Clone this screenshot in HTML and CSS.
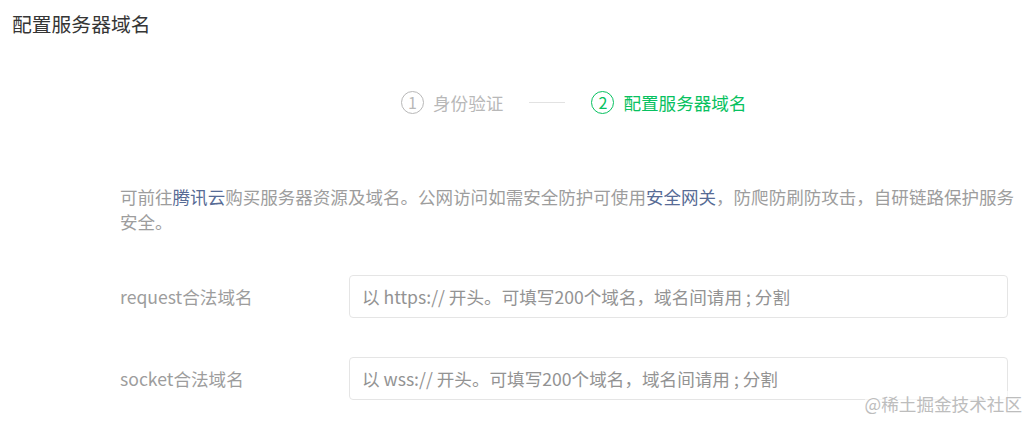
FILE: index.html
```html
<!DOCTYPE html>
<html lang="zh-CN">

<head>
    <meta charset="UTF-8">
    <meta name="viewport" content="width=device-width, initial-scale=1.0">
    <title>配置服务器域名</title>
    <link rel="stylesheet" href="styles.css">
</head>

<body>
    <div class="page">
        <h1 class="title">配置服务器域名</h1>

        <div class="steps">
            <div class="step done">
                <span class="num">1</span>
                <span class="label">身份验证</span>
            </div>
            <div class="step-line"></div>
            <div class="step active">
                <span class="num">2</span>
                <span class="label">配置服务器域名</span>
            </div>
        </div>

        <p class="desc">可前往<a href="#">腾讯云</a>购买服务器资源及域名。公网访问如需安全防护可使用<a href="#">安全网关</a>，防爬防刷防攻击，自研链路保护服务安全。</p>

        <div class="form">
            <div class="row">
                <label class="row-label">request合法域名</label>
                <input class="row-input" type="text" placeholder="以 https:// 开头。可填写200个域名，域名间请用 ; 分割">
            </div>
            <div class="row">
                <label class="row-label">socket合法域名</label>
                <input class="row-input" type="text" placeholder="以 wss:// 开头。可填写200个域名，域名间请用 ; 分割">
            </div>
        </div>

        <span class="watermark">@稀土掘金技术社区</span>
    </div>
</body>

</html>
```

FILE: styles.css
```css
body {
    margin: 0;
    background: #fff;
    font-family: "Noto Sans CJK SC", "Noto Sans", sans-serif;
    overflow: hidden;
}

.page {
    position: relative;
    height: 421px;
    padding: 10px 21px 0 12px;
    box-sizing: border-box;
}

.title {
    margin: 0;
    font-size: 19.8px;
    line-height: 28px;
    font-weight: normal;
    color: #353535;
}

.steps {
    display: flex;
    align-items: center;
    margin: 52px 0 0 389px;
    height: 24px;
}

.step {
    display: flex;
    align-items: center;
    gap: 9px;
    font-size: 17.6px;
    color: #b8b8b8;
}

.step .num {
    width: 21px;
    height: 21px;
    border: 1px solid #b8b8b8;
    border-radius: 50%;
    display: flex;
    justify-content: center;
    align-items: center;
    font-size: 16px;
    line-height: 1;
}

.step.active {
    color: #07c160;
}

.step.active .num {
    border-color: #07c160;
}

.step-line {
    width: 36px;
    height: 1px;
    background: #e2e2e2;
    margin: 0 26px 0 26px;
}

.desc {
    margin: 70px -21px 0 108px;
    font-size: 17.55px;
    line-height: 25px;
    color: #9d9d9d;
}

.desc a {
    color: #576b95;
    text-decoration: none;
}

.form {
    display: flex;
    flex-direction: column;
    gap: 39px;
    margin: 41px 0 0 108px;
}

.row {
    display: flex;
    align-items: center;
}

.row-label {
    width: 229px;
    flex-shrink: 0;
    font-size: 17.6px;
    color: #9d9d9d;
}

.row-input {
    flex: 1;
    height: 43px;
    box-sizing: border-box;
    border: 1px solid #e5e5e5;
    border-radius: 4px;
    padding: 0 12px;
    font-family: inherit;
    font-size: 17.6px;
    color: #353535;
    outline: none;
}

.row-input::placeholder {
    color: #939393;
}

.watermark {
    position: absolute;
    right: 7px;
    bottom: 5px;
    font-size: 17.6px;
    color: #bdbdbd;
    background: rgba(255, 255, 255, 0.6);
}
```
